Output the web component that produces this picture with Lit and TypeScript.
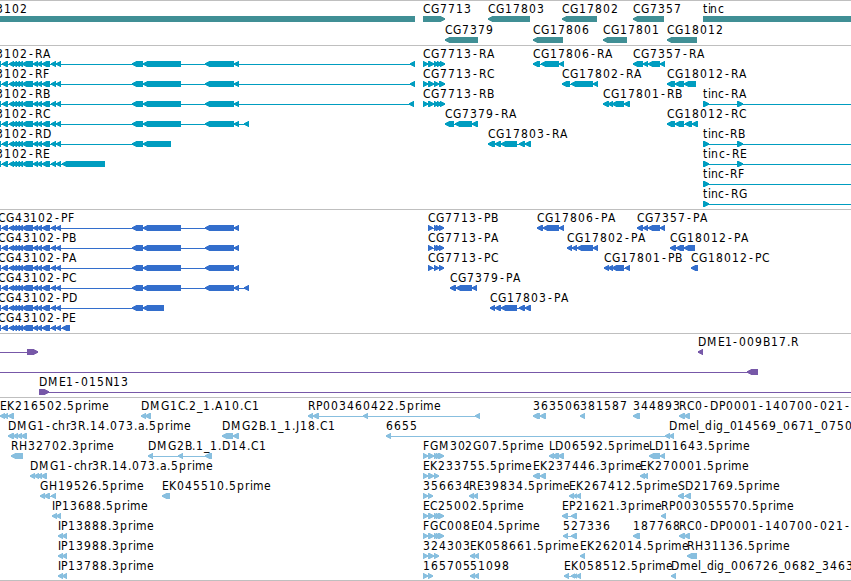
import { LitElement, html, svg, css } from 'lit';
import { customElement, property } from 'lit/decorators.js';

type Span = [number, number];

interface Feature {
  row: number;
  name?: string;
  // left and right edge of the label
  label?: Span;
  blocks: Span[];
  forward?: boolean;
  // intron line, defaults to the extent of the blocks
  line?: Span;
  // no arrow head, the feature runs off the view
  plain?: boolean;
}

const VIEW_WIDTH = 851;
const BAR = 6;

// inset of each pixel column of an arrow head, from the tip on
const HEAD = [2, 1.5, 1, 0.5, 0];

// cell widths of the label characters, 8 where nothing is listed
const ADVANCE: Record<string, number> = {
  G: 9, A: 9, H: 9, D: 9, M: 11, P: 7, E: 7, F: 7, B: 8, L: 6, S: 7, I: 3, J: 4,
  '-': 7, '.': 4, _: 6,
  r: 5, i: 3, m: 11, e: 7, a: 7, c: 6, l: 3, t: 5,
};

// the characters sit on whole pixels, so each one gets its own x
const charPositions = (text: string, [a, b]: Span) => {
  const cells = [...text].map((c) => ADVANCE[c] ?? 8);
  const total = cells.reduce((sum, w) => sum + w, 0);
  const fit = (b - a + 0.5) / total;
  // labels within a pixel of their natural width keep the even grid
  const scale = Math.abs(b - a - total) <= 1 ? 1 : fit;
  let x = 0;
  return cells
    .map((w, i) => {
      const at = a + Math.round(x * scale) + (text[i] === '-' ? 1 : 0);
      x += w;
      return at;
    })
    .join(' ');
};

const f = (row: number, name: string, label: Span, blocks: Span[], extra: Partial<Feature> = {}): Feature =>
  ({ row, name, label, blocks, ...extra });

const fwd = { forward: true };

const cluster: Span[] = [
  [-4, 1], [2, 8], [9, 14], [12, 17], [15, 20], [18, 23], [22, 33],
  [33, 38], [37, 42], [42, 50], [51, 56], [56, 61],
];
const middle: Span[] = [[132, 143], [143, 181], [205, 234], [234, 239]];

const genes: Feature[] = [
  f(0, 'CG43102', [-29, 27], [[-10, 415]], { plain: true }),
  f(0, 'CG7713', [423, 471], [[423, 445]], fwd),
  f(0, 'CG17803', [488, 544], [[488, 530]]),
  f(0, 'CG17802', [562, 618], [[562, 597]]),
  f(0, 'CG7357', [633, 682], [[633, 664]]),
  f(0, 'tinc', [703, 723], [[703, 860]], { plain: true }),
  f(1, 'CG7379', [445, 494], [[445, 478]]),
  f(1, 'CG17806', [533, 590], [[533, 563]]),
  f(1, 'CG17801', [603, 660], [[603, 627]]),
  f(1, 'CG18012', [667, 723], [[667, 697]]),
];

const tincLine = { forward: true, line: [703, 860] as Span };

const transcripts: Feature[] = [
  f(0, 'CG43102-RA', [-29, 51], [...cluster, ...middle, [410, 415]]),
  f(1, 'CG43102-RF', [-29, 49], [...cluster, ...middle, [410, 415]]),
  f(2, 'CG43102-RB', [-29, 50], [...cluster, ...middle, [409, 414]]),
  f(3, 'CG43102-RC', [-29, 50], [...cluster, ...middle, [244, 249]]),
  f(4, 'CG43102-RD', [-29, 51], [...cluster, [132, 143], [143, 171]]),
  f(5, 'CG43102-RE', [-29, 50], [...cluster, [62, 105]]),
  f(0, 'CG7713-RA', [423, 496], [[423, 428], [428, 434], [434, 439], [437, 442], [440, 445]], fwd),
  f(1, 'CG7713-RC', [423, 495], [[423, 428], [428, 434], [434, 439], [439, 445]], fwd),
  f(2, 'CG7713-RB', [423, 494], [[423, 428], [428, 434], [434, 439], [437, 442], [440, 445]], fwd),
  f(3, 'CG7379-RA', [445, 518], [[445, 454], [455, 472], [472, 478]]),
  f(4, 'CG17803-RA', [488, 569], [[488, 495], [495, 501], [501, 517], [519, 525], [525, 531]]),
  f(0, 'CG17806-RA', [533, 614], [[533, 540], [541, 559], [559, 564]]),
  f(1, 'CG17802-RA', [562, 643], [[562, 570], [571, 593], [593, 598]]),
  f(2, 'CG17801-RB', [603, 682], [[603, 609], [608, 613], [612, 624], [624, 630]]),
  f(0, 'CG7357-RA', [633, 706], [[633, 643], [643, 648], [648, 660], [660, 665]]),
  f(1, 'CG18012-RA', [667, 748], [[667, 675], [675, 684], [684, 696]]),
  f(3, 'CG18012-RC', [667, 747], [[667, 675], [675, 684], [685, 692], [692, 698]]),
  f(2, 'tinc-RA', [703, 747], [[703, 709], [737, 743]], tincLine),
  f(4, 'tinc-RB', [703, 745], [[703, 709], [737, 743]], tincLine),
  f(5, 'tinc-RE', [703, 746], [[703, 709], [737, 743]], tincLine),
  f(6, 'tinc-RF', [703, 744], [[703, 709]], tincLine),
  f(7, 'tinc-RG', [703, 747], [[703, 709]], tincLine),
];

const proteins: Feature[] = [
  f(0, 'CG43102-PF', [-2, 74], [...cluster, ...middle]),
  f(1, 'CG43102-PB', [-2, 76], [...cluster, ...middle]),
  f(2, 'CG43102-PA', [-2, 78], [...cluster, ...middle]),
  f(3, 'CG43102-PC', [-2, 77], [...cluster, ...middle, [244, 249]]),
  f(4, 'CG43102-PD', [-2, 78], [...cluster, [132, 143], [143, 164]]),
  f(5, 'CG43102-PE', [-2, 76], [...cluster, [62, 70]]),
  f(0, 'CG7713-PB', [428, 498], [[428, 433], [434, 439], [436, 441], [439, 444]], fwd),
  f(1, 'CG7713-PA', [428, 500], [[428, 433], [434, 439], [436, 441], [439, 444]], fwd),
  f(2, 'CG7713-PC', [428, 499], [[428, 433], [434, 439], [439, 444]], fwd),
  f(3, 'CG7379-PA', [450, 522], [[450, 456], [456, 472], [472, 477]]),
  f(4, 'CG17803-PA', [490, 570], [[490, 495], [495, 501], [501, 517], [519, 525], [525, 531]]),
  f(0, 'CG17806-PA', [537, 617], [[537, 543], [543, 559], [559, 564]]),
  f(1, 'CG17802-PA', [567, 647], [[567, 572], [572, 577], [577, 593], [593, 598]]),
  f(2, 'CG17801-PB', [604, 682], [[604, 609], [608, 613], [612, 624], [625, 630]]),
  f(0, 'CG7357-PA', [637, 709], [[637, 643], [643, 648], [648, 660], [660, 665]]),
  f(1, 'CG18012-PA', [670, 750], [[670, 676], [676, 684], [684, 695]]),
  f(2, 'CG18012-PC', [691, 770], [[691, 698]]),
];

const clones: Feature[] = [
  { row: 0, blocks: [[27, 38]], line: [-5, 38], forward: true },
  f(0, 'DME1-009B17.R', [698, 798], [[698, 703]]),
  { row: 1, blocks: [[747, 758]], line: [-5, 758] },
  f(2, 'DME1-015N13', [39, 128], [[39, 49]], { forward: true, line: [39, 860] }),
];

const two: Span[] = [[423, 428], [428, 433]];
const three: Span[] = [[423, 428], [428, 434], [434, 439]];
const five: Span[] = [...three, [436, 441], [438, 444]];

const ests: Feature[] = [
  f(0, 'EK216502.5prime', [0, 109], [[0, 5], [3, 8], [8, 14]]),
  f(0, 'DMG1C.2_1.A10.C1', [141, 259], [[141, 146], [145, 151]]),
  f(0, 'RP003460422.5prime', [308, 441], [[308, 313], [313, 319], [363, 368], [475, 480]]),
  f(0, '363506', [533, 581], [[533, 540], [540, 546]]),
  f(0, '381587', [580, 628], [[580, 585]]),
  f(0, '344893', [633, 680], [[633, 640]]),
  f(0, 'RC0-DP0001-140700-021-', [679, 851], [[679, 685], [684, 690]]),

  f(1, 'DMG1-chr3R.14.073.a.5prime', [8, 190], [[8, 14], [13, 18], [17, 22], [21, 27]]),
  f(1, 'DMG2B.1_1.J18.C1', [222, 335], [[222, 233], [233, 239]]),
  f(1, '6655', [386, 417], [[386, 391], [665, 670], [669, 674]]),
  f(1, 'Dmel_dig_014569_0671_0750', [669, 852], []),

  f(2, 'RH32702.3prime', [11, 114], [[11, 23]]),
  f(2, 'DMG2B.1_1.D14.C1', [148, 266], [[148, 153], [178, 183], [205, 212]]),
  f(2, 'FGM302G07.5prime', [423, 543], five, fwd),
  f(2, 'LD06592.5prime', [549, 650], [[549, 554], [552, 559], [558, 564]]),
  f(2, 'LD11643.5prime', [649, 750], [[649, 660], [660, 665]]),

  f(3, 'DMG1-chr3R.14.073.a.5prime', [30, 212], [[30, 35], [34, 39], [37, 42], [41, 47]]),
  f(3, 'EK233755.5prime', [423, 532], three, fwd),
  f(3, 'EK237446.3prime', [533, 642], [[533, 540], [540, 546]]),
  f(3, 'EK270001.5prime', [640, 749], [[640, 645], [643, 648]]),

  f(4, 'GH19526.5prime', [40, 144], [[40, 45], [44, 50], [51, 56]]),
  f(4, 'EK045510.5prime', [162, 271], [[162, 170]]),
  f(4, '356634', [423, 470], two, fwd),
  f(4, 'RE39834.5prime', [469, 570], [[469, 474], [473, 478]]),
  f(4, 'EK267412.5prime', [569, 678], [[569, 574], [573, 577], [576, 581]]),
  f(4, 'SD21769.5prime', [678, 779], [[678, 684], [685, 691]]),

  f(5, 'IP13688.5prime', [52, 148], [[52, 57], [56, 61]]),
  f(5, 'EC25002.5prime', [423, 524], five, fwd),
  f(5, 'EP21621.3prime', [562, 662], [[562, 568], [571, 577]]),
  f(5, 'RP003055570.5prime', [661, 794], [[661, 666]]),

  f(6, 'IP13888.3prime', [58, 154], [[58, 63], [62, 67]]),
  f(6, 'FGC008E04.5prime', [423, 539], five, fwd),
  f(6, '527336', [563, 611], [[563, 568], [571, 577]]),
  f(6, '187768', [633, 681], [[633, 640]]),
  f(6, 'RC0-DP0001-140700-021-', [679, 851], [[679, 685], [684, 690]]),

  f(7, 'IP13988.3prime', [58, 154], [[58, 63], [62, 67]]),
  f(7, '324303', [423, 470], three, fwd),
  f(7, 'EK058661.5prime', [470, 579], [[470, 475], [474, 479]]),
  f(7, 'EK262014.5prime', [580, 689], [[580, 585]]),
  f(7, 'RH31136.5prime', [687, 790], [[687, 697]]),

  f(8, 'IP13788.3prime', [58, 154], [[58, 63], [62, 67]]),
  f(8, '165705', [423, 471], two, fwd),
  f(8, '51098', [470, 510], [[470, 475], [474, 479]]),
  f(8, 'EK058512.5prime', [564, 673], [[564, 569], [571, 575], [573, 577], [576, 581]]),
  f(8, 'Dmel_dig_006726_0682_3463', [671, 853], [[671, 676]]),
];

@customElement('feature-track')
export class FeatureTrack extends LitElement {
  @property({ attribute: false }) features: Feature[] = [];
  @property({ type: Number }) height = 40;
  @property({ type: Number }) pitch = 20;
  @property() color = '#000';

  static styles = css`
    :host {
      display: block;
      border-top: 1px solid #bfbfbf;
    }

    .track {
      display: block;
      overflow: hidden;
    }

    .label {
      font-family: "DejaVu Sans Condensed", "DejaVu Sans", sans-serif;
      font-stretch: semi-condensed;
      font-size: 12px;
      fill: #000;
    }
  `;

  block([a, b]: Span, top: number, forward?: boolean, plain?: boolean) {
    const low = top + BAR;
    if (plain) {
      return svg`<rect x=${a} y=${top} width=${b - a} height=${BAR}></rect>`;
    }
    const tip = forward ? b : a;
    const step = forward ? -1 : 1;
    let upper = `M${tip} ${top + HEAD[0]}`;
    let lower = '';
    HEAD.forEach((inset, i) => {
      const from = tip + step * i;
      const to = from + step;
      upper += `L${from} ${top + inset}L${to} ${top + inset}`;
      lower = `L${to} ${low - inset}L${from} ${low - inset}` + lower;
    });
    const back = forward ? a : b;
    return svg`<path d="${upper}L${back} ${top}L${back} ${low}${lower}Z"></path>`;
  }

  feature(item: Feature) {
    const top = item.row * this.pitch + 15;
    const first = item.blocks[0];
    const last = item.blocks[item.blocks.length - 1];
    const line = item.line ?? (first ? [first[0], last[1]] : undefined);
    return svg`
      <g fill=${this.color}>
        ${line ? svg`<rect x=${line[0]} y=${top + 3} width=${line[1] - line[0]} height="1"></rect>` : ''}
        ${item.blocks.map((b) => this.block(b, top, item.forward, item.plain))}
      </g>
      ${item.label
        ? svg`<text class="label" x=${charPositions(item.name ?? '', item.label)} y=${top - 3}>${item.name}</text>`
        : ''}
    `;
  }

  render() {
    return html`
      <svg class="track" width=${VIEW_WIDTH} height=${this.height}>
        ${this.features.map((item) => this.feature(item))}
      </svg>
    `;
  }
}

@customElement('app-root')
export class AppRoot extends LitElement {
  static styles = css`
    :host {
      display: block;
      width: 851px;
      height: 581px;
      overflow: hidden;
      background: #fff;
    }

    .browser {
      display: flex;
      flex-direction: column;
      border-bottom: 1px solid #bfbfbf;
    }
  `;

  render() {
    return html`
      <div class="browser">
        <feature-track .features=${genes} height="44" pitch="21" color="#408f95"></feature-track>
        <feature-track .features=${transcripts} height="163" color="#009dc0"></feature-track>
        <feature-track .features=${proteins} height="123" color="#336ecc"></feature-track>
        <feature-track .features=${clones} height="63" color="#7758a8"></feature-track>
        <feature-track .features=${ests} height="182" color="#88bfdf"></feature-track>
      </div>
    `;
  }
}
